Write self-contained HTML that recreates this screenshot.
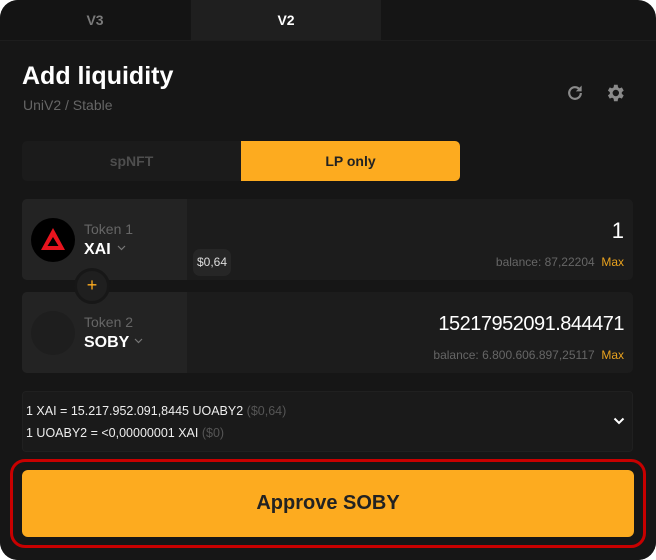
<!DOCTYPE html>
<html><head><style>
*{margin:0;padding:0;box-sizing:border-box}
body{width:656px;height:560px;background:#fff;font-family:"Liberation Sans",sans-serif;overflow:hidden}
.card{position:absolute;left:0;top:0;width:656px;height:560px;background:#151515;border-radius:18px;overflow:hidden}
.abs{position:absolute}
.tab{top:0;height:40px;width:190px;text-align:center;line-height:40px;font-size:14px;font-weight:bold}
.body{left:0;top:40px;width:656px;height:520px;background:#161616;border-top:1px solid #1d1d1d}
.gray{color:#6f6f6f}
</style></head><body>
<div class="card">
<div class="abs tab" style="left:0;background:#141414;color:#7a7a7a">V3</div>
<div class="abs tab" style="left:191px;background:#1f1f1f;color:#fff">V2</div>
<div class="abs body"></div>
<div class="abs" style="left:22px;top:62px;font-size:25px;font-weight:bold;color:#fff">Add liquidity</div>
<div class="abs" style="left:23px;top:97px;font-size:14px;color:#666">UniV2 / Stable</div>
<svg class="abs" style="left:565px;top:83px" width="20" height="20" viewBox="0 0 24 24"><path d="M19 12a7 7 0 1 1-2.05-4.95" fill="none" stroke="#8a8a8a" stroke-width="2.6"/><path d="M20 3v7h-7z" fill="#8a8a8a"/></svg>
<svg class="abs" style="left:604px;top:82px" width="22" height="22" viewBox="0 0 24 24"><path fill="#8a8a8a" d="M19.4 13a7.5 7.5 0 0 0 0-2l2.1-1.6-2-3.5-2.5 1a7 7 0 0 0-1.7-1L14.9 3h-4l-.4 2.9a7 7 0 0 0-1.7 1l-2.5-1-2 3.5L6.4 11a7.5 7.5 0 0 0 0 2l-2.1 1.6 2 3.5 2.5-1a7 7 0 0 0 1.7 1l.4 2.9h4l.4-2.9a7 7 0 0 0 1.7-1l2.5 1 2-3.5zM12.9 15.5a3.5 3.5 0 1 1 0-7 3.5 3.5 0 0 1 0 7z"/></svg>
<div class="abs" style="left:22px;top:141px;width:438px;height:40px;background:#1b1b1b;border-radius:5px"></div>
<div class="abs" style="left:22px;top:141px;width:219px;height:40px;line-height:40px;text-align:center;font-size:14px;font-weight:bold;color:#4e4e4e">spNFT</div>
<div class="abs" style="left:241px;top:141px;width:219px;height:40px;line-height:40px;text-align:center;font-size:14px;font-weight:bold;color:#222;background:#fdab1f;border-radius:0 5px 5px 0">LP only</div>

<div class="abs" style="left:22px;top:199px;width:611px;height:81px;background:#1c1c1c;border-radius:5px"></div>
<div class="abs" style="left:22px;top:199px;width:165px;height:81px;background:#232323;border-radius:5px 0 0 5px"></div>
<div class="abs" style="left:31px;top:218px;width:44px;height:44px;border-radius:50%;background:#000"></div>
<svg class="abs" style="left:38px;top:224px" width="30" height="30" viewBox="0 0 30 30"><path d="M15 4L27 26H3z M15 13L20.5 22H9.5z" fill="#e8141e" fill-rule="evenodd"/></svg>
<div class="abs" style="left:84px;top:221px;font-size:14px;color:#666">Token 1</div>
<div class="abs" style="left:84px;top:241px;font-size:16px;font-weight:bold;color:#fff">XAI</div>
<svg class="abs" style="left:117px;top:245px" width="9" height="6" viewBox="0 0 9 6"><path d="M1 1l3.5 3.5L8 1" fill="none" stroke="#777" stroke-width="1.2"/></svg>
<div class="abs" style="left:193px;top:249px;width:38px;height:27px;background:#262626;border-radius:7px;color:#ddd;font-size:12px;line-height:27px;text-align:center">$0,64</div>
<div class="abs" style="right:32px;top:218px;font-size:22px;color:#fff">1</div>
<div class="abs" style="right:32px;top:255px;font-size:12px;color:#666">balance: 87,22204 &nbsp;<span style="color:#e9a21e">Max</span></div>

<div class="abs" style="left:22px;top:292px;width:611px;height:81px;background:#1c1c1c;border-radius:5px"></div>
<div class="abs" style="left:22px;top:292px;width:165px;height:81px;background:#232323;border-radius:5px 0 0 5px"></div>
<div class="abs" style="left:31px;top:311px;width:44px;height:44px;border-radius:50%;background:#1e1e1e"></div>
<div class="abs" style="left:84px;top:314px;font-size:14px;color:#666">Token 2</div>
<div class="abs" style="left:84px;top:334px;font-size:16px;font-weight:bold;color:#fff">SOBY</div>
<svg class="abs" style="left:134px;top:338px" width="9" height="6" viewBox="0 0 9 6"><path d="M1 1l3.5 3.5L8 1" fill="none" stroke="#777" stroke-width="1.2"/></svg>
<div class="abs" style="right:32px;top:313px;font-size:20px;color:#fff;letter-spacing:-0.5px">15217952091.844471</div>
<div class="abs" style="right:32px;top:348px;font-size:12px;color:#666">balance: 6.800.606.897,25117 &nbsp;<span style="color:#e9a21e">Max</span></div>

<div class="abs" style="left:74px;top:268px;width:36px;height:36px;border-radius:50%;background:#1f1f1f;border:3px solid #171717;color:#fdab1f;text-align:center;line-height:28px;font-size:18px">+</div>

<div class="abs" style="left:22px;top:391px;width:611px;height:61px;background:#1a1a1a;border:1px solid #202020;border-radius:4px"></div>
<div class="abs" style="left:26px;top:404px;font-size:12.5px;color:#eee">1 XAI = 15.217.952.091,8445 UOABY2 <span style="color:#555">($0,64)</span></div>
<div class="abs" style="left:26px;top:426px;font-size:12.5px;color:#eee">1 UOABY2 = &lt;0,00000001 XAI <span style="color:#555">($0)</span></div>
<svg class="abs" style="left:613px;top:416px" width="12" height="10" viewBox="0 0 12 10"><path d="M1.5 2.5L6 7l4.5-4.5" fill="none" stroke="#fff" stroke-width="2"/></svg>

<div class="abs" style="left:10px;top:459px;width:636px;height:89px;border:3px solid #c80000;border-radius:15px"></div>
<div class="abs" style="left:22px;top:470px;width:612px;height:67px;background:#fdab1f;border-radius:6px;text-align:center;line-height:67px;font-size:20px;font-weight:bold;color:#222">Approve SOBY</div>
</div>
</body></html>
